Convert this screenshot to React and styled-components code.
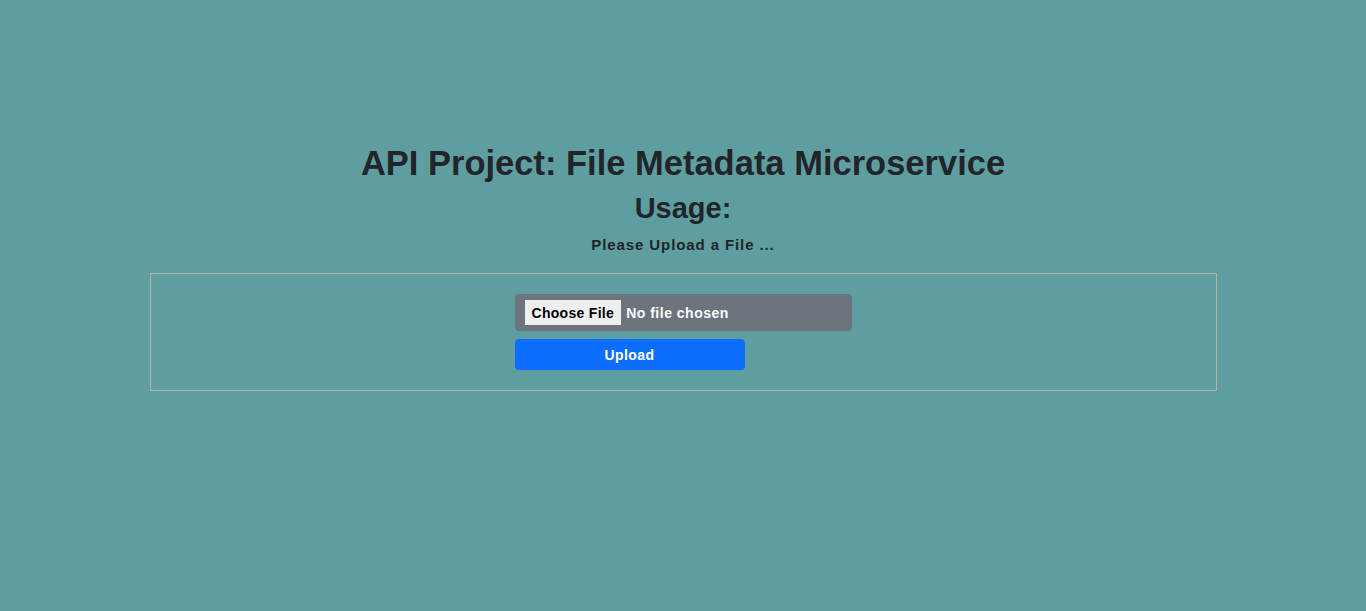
import React from "react";
import styled, { createGlobalStyle } from "styled-components";

const GlobalStyle = createGlobalStyle`
    html, body {
        margin: 0;
        padding: 0;
        background: #5f9ea0;
        min-height: 100%;
    }
    body {
        font-family: "Liberation Sans", Arial, sans-serif;
        color: #212529;
    }
`;

const Page = styled.div`
    min-height: 611px;
    padding-top: 142px;
    box-sizing: border-box;
    text-align: center;
`;

const Title = styled.h1`
    margin: 0;
    font-size: 34.5px;
    line-height: 42px;
    font-weight: 700;
`;

const SubTitle = styled.h2`
    margin: 6px 0 0;
    font-size: 29px;
    line-height: 36px;
    font-weight: 700;
`;

const Hint = styled.h6`
    margin: 9px 0 0;
    font-size: 15px;
    letter-spacing: 0.9px;
    line-height: 20px;
    font-weight: 700;
`;

const Panel = styled.div`
    width: 1067px;
    margin: 18px auto 0;
    border: 1px solid #bcaeab;
    box-sizing: border-box;
    padding: 20px 0 20px;
    display: flex;
    justify-content: center;
`;

const UploadForm = styled.form`
    width: 337px;
    display: flex;
    flex-direction: column;
    align-items: flex-start;
    gap: 8px;
`;

const FileInput = styled.input`
    width: 337px;
    height: 37px;
    box-sizing: border-box;
    padding: 6px 10px;
    background: #6c757d;
    border-radius: 4px;
    color: #fff;
    font-family: inherit;
    font-size: 14px;
    letter-spacing: 0.5px;
    font-weight: 700;

    &::file-selector-button {
        height: 25px;
        margin-right: 5px;
        padding: 0 7px;
        border: none;
        background: #efefef;
        color: #000;
        font-family: inherit;
        font-size: 14px;
        letter-spacing: 0.3px;
        font-weight: 700;
    }
`;

const SubmitButton = styled.button`
    width: 230px;
    height: 31px;
    border: none;
    border-radius: 4px;
    background: #0d6efd;
    color: #fff;
    font-family: inherit;
    font-size: 14px;
    letter-spacing: 0.4px;
    font-weight: 700;
    cursor: pointer;
`;

function App() {
    return (
        <>
            <GlobalStyle />
            <Page>
                <Title>API Project: File Metadata Microservice</Title>
                <SubTitle>Usage:</SubTitle>
                <Hint>Please Upload a File ...</Hint>
                <Panel>
                    <UploadForm onSubmit={(e) => e.preventDefault()}>
                        <FileInput type="file" name="upfile" />
                        <SubmitButton type="submit">Upload</SubmitButton>
                    </UploadForm>
                </Panel>
            </Page>
        </>
    );
}

export default App;
